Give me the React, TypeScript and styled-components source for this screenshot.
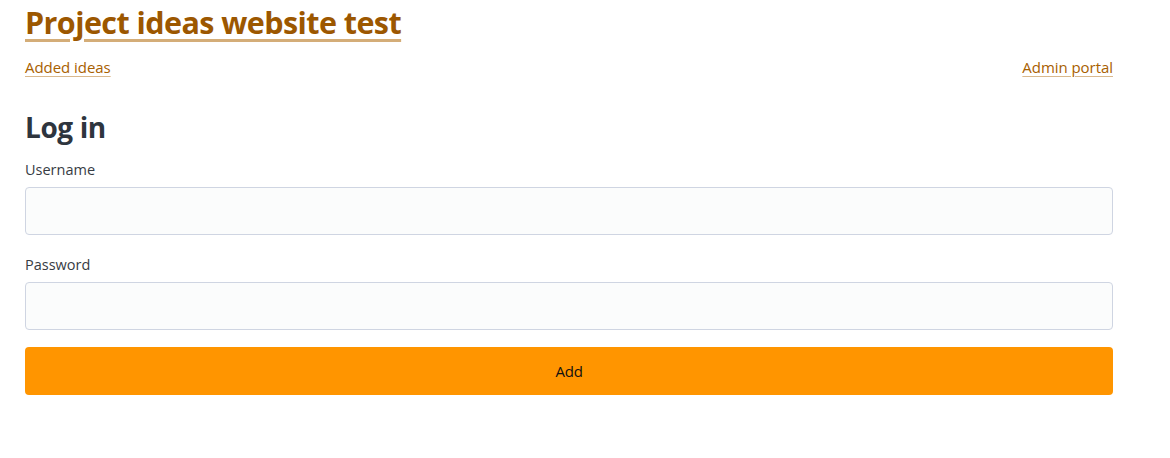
import React from "react";
import styled, { createGlobalStyle } from "styled-components";

const Global = createGlobalStyle`
  html, body { margin: 0; padding: 0; background: #ffffff; }
  body { font-family: "Open Sans", "Noto Sans", sans-serif; color: #373c44; }
  * { box-sizing: border-box; }
`;

const Page = styled.main`
  width: 1088px;
  margin-left: 25px;
  display: flex;
  flex-direction: column;
`;

const Title = styled.h1`
  margin: 0;
  padding-top: 2px;
  font-size: 30.5px;
  line-height: 40px;
  font-weight: 700;
  letter-spacing: -0.57px;
  a {
    color: #9c5700;
    text-decoration: underline;
    text-decoration-color: #d4ad78;
    text-decoration-thickness: 3px;
    text-underline-offset: 5px;
  }
`;

const Nav = styled.nav`
  display: flex;
  justify-content: space-between;
  margin-top: 14px;
`;

const NavLink = styled.a`
  font-size: 15px;
  line-height: 22px;
  color: #a86000;
  text-decoration: underline;
  text-decoration-color: #d9b98e;
  text-underline-offset: 3px;
  letter-spacing: -0.05px;
`;

const Heading = styled.h2`
  margin: 32px 0 0;
  font-size: 28px;
  line-height: 34px;
  font-weight: 700;
  color: #2e353e;
  letter-spacing: -0.4px;
`;

const Form = styled.form`
  display: flex;
  flex-direction: column;
  margin-top: 15px;
`;

const Label = styled.label`
  font-size: 14.5px;
  line-height: 22px;
  color: #373c44;
  margin-bottom: 6px;
`;

const Input = styled.input`
  height: 48px;
  width: 100%;
  background: #fbfcfc;
  border: 1px solid #cfd5e2;
  border-radius: 4px;
  margin-bottom: 19px;
  padding: 0 16px;
  font: inherit;
  outline: none;
`;

const Button = styled.button`
  height: 48px;
  width: 100%;
  margin-top: -2px;
  background: #ff9500;
  border: none;
  border-radius: 4px;
  font-family: "Open Sans", "Noto Sans", sans-serif;
  font-size: 15px;
  color: #111111;
  letter-spacing: -0.2px;
`;

export default function App() {
  return (
    <>
      <Global />
      <Page>
        <Title>
          <a href="#">Project ideas website test</a>
        </Title>
        <Nav>
          <NavLink href="#">Added ideas</NavLink>
          <NavLink href="#">Admin portal</NavLink>
        </Nav>
        <Heading>Log in</Heading>
        <Form onSubmit={(e) => e.preventDefault()}>
          <Label htmlFor="username">Username</Label>
          <Input id="username" type="text" />
          <Label htmlFor="password">Password</Label>
          <Input id="password" type="password" />
          <Button type="submit">Add</Button>
        </Form>
      </Page>
    </>
  );
}
